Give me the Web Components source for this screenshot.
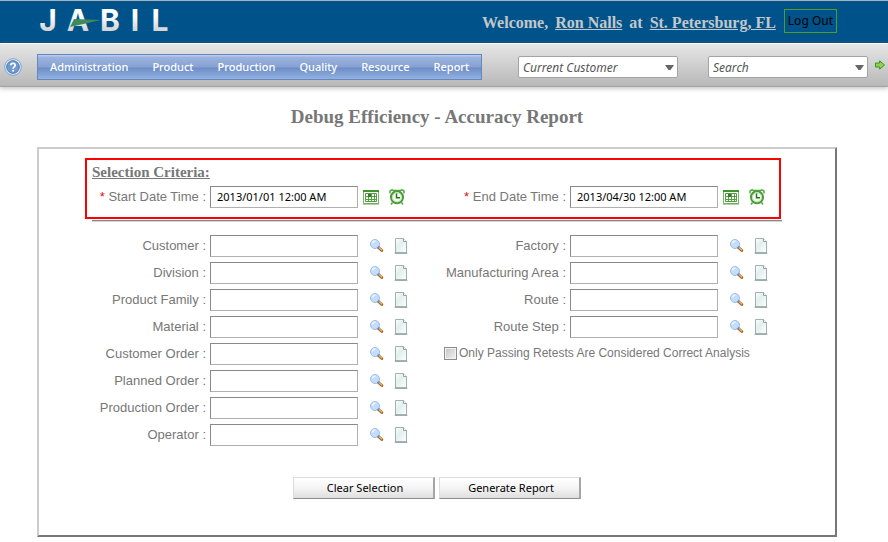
<!DOCTYPE html>
<html lang="en">
<head>
<meta charset="utf-8">
<title>Debug Efficiency - Accuracy Report</title>
<style>
  body { margin: 0; background: #fff; color: #777; font-family: "Liberation Sans", Arial, sans-serif; font-size: 13px;
    --ui: "Noto Sans", "Open Sans", sans-serif; --serif: "Liberation Serif", "Times New Roman", serif; }
</style>
</head>
<body>
<app-header></app-header>
<app-toolbar></app-toolbar>
<report-page heading="Debug Efficiency - Accuracy Report"></report-page>
<script>
const define = (name, html) => {
  const t = document.createElement('template');
  t.innerHTML = html;
  customElements.define(name, class extends HTMLElement {
    constructor() {
      super();
      this.attachShadow({ mode: 'open' }).append(t.content.cloneNode(true));
    }
    connectedCallback() {
      this.shadowRoot.querySelectorAll('[data-text]').forEach(e => { e.textContent = this.getAttribute(e.dataset.text) || ''; });
      this.shadowRoot.querySelectorAll('[data-value]').forEach(e => { e.value = this.getAttribute(e.dataset.value) || ''; });
      this.shadowRoot.querySelectorAll('[data-label]').forEach(e => { e.setAttribute('aria-label', e.dataset.label + ' ' + (this.getAttribute('label') || '')); });
    }
  });
};

const iconButton = 'button.icon { display: block; flex: none; width: 16px; height: 16px; padding: 0; border: 0; background: none; cursor: pointer; } svg { display: block; }';

define('brand-logo', `
<style>
  :host { display: block; }
  svg { display: block; overflow: visible; }
  text { font-family: Inter, "Liberation Sans", sans-serif; font-weight: 700; font-size: 30px; text-anchor: middle; }
</style>
<svg width="136" height="40" viewBox="0 0 136 40" role="img" aria-label="JABIL">
  <defs><linearGradient id="m" gradientUnits="userSpaceOnUse" x1="0" y1="8" x2="0" y2="30"><stop offset=".3" stop-color="#fff"/><stop offset="1" stop-color="#d2d2d2"/></linearGradient></defs>
  <text y="30" x="11 41 73 98 123" fill="url(#m)">JABIL</text>
  <path d="M33 26 37 18 64 19Z" fill="#3f8a5c"/>
</svg>`);

define('app-header', `
<style>
  :host { display: flex; align-items: flex-start; justify-content: space-between; box-sizing: border-box; height: 43px; padding: 0 51px 0 37px;
    background: #00528a; border-top: 1px solid #a9b1b8; border-bottom: 1px solid #00406e; white-space: nowrap; }
  .user { display: flex; align-items: flex-start; gap: 8px; margin-top: 8px; font: bold 16px/28px var(--serif); color: #c3c7ca; }
  p { display: flex; gap: 7px; margin: 0; }
  a { color: inherit; text-decoration: underline; }
  button { height: 24px; padding: 0 3px; border: 1px solid #4f9d2d; border-radius: 0; background: none; color: #000; font: 12px/20px var(--ui); }
</style>
<brand-logo></brand-logo>
<div class="user"><p><span>Welcome,</span><a href="#user">Ron Nalls</a><span>at</span><a href="#site">St. Petersburg, FL</a></p><button type="button">Log Out</button></div>`);

define('main-menu', `
<style>
  :host { display: block; }
  nav { display: flex; gap: 24px; box-sizing: border-box; height: 26px; padding: 0 12px; border: 1px solid #6486c2;
    background: linear-gradient(#b8caea 0, #b8caea 1px, #9cb3de 2px, #86a1d2 12px, #6c8dc7 13px, #93b2e0 24px); }
  a { color: #fff; text-decoration: none; font: 500 11px/24px var(--ui); }
</style>
<nav><a href="#administration">Administration</a><a href="#product">Product</a><a href="#production">Production</a><a href="#quality">Quality</a><a href="#resource">Resource</a><a href="#report">Report</a></nav>`);

define('combo-box', `
<style>
  :host { display: block; flex: none; position: relative; width: 160px; }
  select { display: block; appearance: none; box-sizing: border-box; width: 100%; height: 22px; margin: 0; padding: 1px 20px 0 4px; border: 1px solid #a3a3a3; border-radius: 2px;
    background: #fff; color: #555; font: italic 12px/20px var(--ui); }
  svg { position: absolute; right: 4px; top: 9px; pointer-events: none; }
</style>
<select data-label="Choose"><option data-text="label"></option></select>
<svg width="9" height="5" viewBox="0 0 9 5"><path d="M0 0h9L5.5 5h-2Z" fill="#666"/></svg>`);

define('app-toolbar', `
<style>
  :host { display: flex; align-items: center; box-sizing: border-box; height: 44px; padding: 0 3px 0 4px; border-top: 1px solid #fff; border-bottom: 1px solid #a2a2a2;
    background: linear-gradient(#e6e6e6, #b8b8b8); box-shadow: 0 2px 4px #ccc; white-space: nowrap; }
  main-menu { margin: 3px auto 0 15px; }
  combo-box { margin: 4px 30px 0 0; }
  combo-box:last-of-type { margin-right: 7px; }
  ${iconButton}
  button.help { width: 18px; height: 18px; margin-top: 3px; }
  button.go { width: 10px; height: 10px; }
</style>
<button class="icon help" type="button" aria-label="Help"><svg width="18" height="18" viewBox="0 0 18 18">
  <circle cx="9" cy="9" r="8.3" fill="#dce8f6" stroke="#82a8d4"/><circle cx="9" cy="9" r="6.3" fill="#7199cf" stroke="#4b7abb"/>
  <path d="M6.700 7.300C6.800 4.400 11.400 4.700 11.200 7.400 11.100 8.900 9.100 8.800 9.100 10.800" fill="none" stroke="#fff" stroke-width="1.7"/><circle cx="9.1" cy="12.8" r="1" fill="#fff"/></svg></button>
<main-menu></main-menu>
<combo-box label="Current Customer"></combo-box>
<combo-box label="Search"></combo-box>
<button class="icon go" type="button" aria-label="Go"><svg width="10" height="10" viewBox="0 0 10 10"><path d="M.5 3h4.2V.8L9.5 5 4.7 9.2V7H.5Z" fill="#8ed04f" stroke="#3c9422"/></svg></button>`);

const field = (extra, icons) => `
<style>
  :host { display: flex; align-items: center; height: 22px; white-space: nowrap; }
  label { flex: none; width: var(--label-width, 121px); margin-right: 4px; text-align: right; line-height: 22px; }
  input { flex: none; box-sizing: border-box; width: 148px; height: 22px; margin: 0; padding: 0 6px 1px; border: 1px solid #b0b0b0; border-top-color: #888; border-left-color: #888;
    border-radius: 0; background: #fff; color: #000; font: 11px/18px var(--ui); }
  .icons { display: flex; ${extra} }
  ${iconButton}
</style>
<label for="v"><slot name="mark"></slot><span data-text="label"></span> :</label><input id="v" type="text" data-value="value">
<div class="icons">${icons}</div>`;

define('lookup-field', field('gap: 8px; margin-left: 11px;', `
<button class="icon" type="button" data-label="Find"><svg width="16" height="16" viewBox="0 0 16 16">
  <path d="m9.5 9.5 3.300 3" stroke="#a86a28" stroke-width="3" stroke-linecap="round"/><path d="m10 9.500 3 2.800" stroke="#e9b472" stroke-width="1.2"/>
  <circle cx="6" cy="6" r="4.5" fill="#c5def8" stroke="#9dbdec"/><path d="M3.500 5.500A3 3 0 0 1 6.500 3" fill="none" stroke="#eef6ff" stroke-width="1.5"/><path d="M8 10.200A4.500 4.500 0 0 0 10.200 8" fill="none" stroke="#6f92d0" stroke-width="1.400"/></svg></button>
<button class="icon" type="button" data-label="Clear"><svg width="16" height="16" viewBox="0 0 16 16">
  <defs><linearGradient id="p" x1="0" y1="0" x2="1" y2="1"><stop stop-color="#fff"/><stop offset=".4" stop-color="#e2efed"/><stop offset="1" stop-color="#fff"/></linearGradient></defs>
  <path d="M1 15.500h14" stroke="#dbe0e0"/><path d="M2.500.500h8l3 3v11.500h-11Z" fill="url(#p)" stroke="#9fb2b1"/><path d="M10.500.500v3h3" fill="#fff" stroke="#8ea3a2"/><path d="M2 15h12" stroke="#7d9090"/></svg></button>`));

define('date-field', field('gap: 10px; margin-left: 5px;', `
<button class="icon" type="button" data-label="Calendar for"><svg width="16" height="16" viewBox="0 0 16 16">
  <path d="M.5 1.500h15v13H.5Z" fill="#fff" stroke="#75b765"/><path d="M0 2h16" stroke="#3f9430" stroke-width="2"/>
  <path d="M2.500 4.500h11v8h-11ZM5.500 4.500v8M8.500 4.500v8M11.500 4.500v8M2 7.500h12M2 10.500h12" fill="none" stroke="#579e43"/><path d="M5 5h3v3H5z" fill="#2f8221"/><path d="M0 15h16" stroke="#65a856"/></svg></button>
<button class="icon" type="button" data-label="Time for"><svg width="16" height="16" viewBox="0 0 16 16">
  <path d="M1 4.500V2L3 .8 5 2M15 4.500V2L13 .8 11 2M3.500 13.500 2 15.500M12.500 13.500l1.500 2M4.500 1.500h7" fill="none" stroke="#57a747" stroke-width="1.500"/>
  <circle cx="8" cy="8.300" r="6" fill="#f8fff5" stroke="#4a9d37" stroke-width="2"/><circle cx="8" cy="8.300" r="4.500" fill="none" stroke="#b6deac"/><path d="M7.500 4.500v4.300H11" fill="none" stroke="#23731b" stroke-width="1.500"/></svg></button>`));

define('check-option', `
<style>
  :host { display: flex; align-items: center; height: 20px; font-size: 12px; white-space: nowrap; }
  input { appearance: none; flex: none; box-sizing: border-box; width: 13px; height: 13px; margin: 0 2px 0 0; border: 1px solid #8c8c8c;
    background: linear-gradient(135deg, #bfc3c6, #f3f3f3); box-shadow: inset 0 0 0 1px #f2f2f2; }
  input:checked { background: #567; }
</style>
<input type="checkbox" id="c"><label for="c"><slot></slot></label>`);

define('action-button', `
<style>
  :host { display: block; }
  button { display: block; box-sizing: border-box; width: 142px; height: 22px; padding: 0 0 0 3px; border: 1px solid #ddd; border-right: 2px solid #a6a6a6; border-bottom: 1px solid #8c8c8c; border-radius: 0;
    background: linear-gradient(#fff, #f4f4f4 50%, #dedede); color: #000; font: 11px/20px var(--ui); }
</style>
<button type="button"><slot></slot></button>`);

define('report-page', `
<style>
  :host { display: block; padding: 20px 14px 5px 0; }
  h1 { margin: 0 0 20px; text-align: center; font: bold 19px/20px var(--serif); }
  form { box-sizing: border-box; max-width: 800px; margin: 0 auto; padding: 9px 53px 36px 46px; border: 2px solid; border-color: #ccc #777 #777 #ccc; }
  .dates { margin-right: 1px; padding: 3px 0 9px; border: 2px solid #f00; --label-width: 119px; }
  h2 { margin: 0; padding-left: 5px; font: bold 15px/18px var(--serif); text-decoration: underline; }
  .cols { display: grid; grid-template-columns: 360px 1fr; }
  .dates .cols { margin-top: 5px; }
  hr { margin: 1px 0 13px 7px; border: 0; border-top: 1px solid #888; border-bottom: 1px solid #d5d5d5; }
  .stack { display: flex; flex-direction: column; gap: 5px; }
  check-option { margin-left: -1px; }
  .actions { display: flex; justify-content: center; gap: 4px; margin: 31px 0 0 7px; }
  .red { color: #e01020; }
  @media (max-width: 820px) { .cols { grid-template-columns: 1fr; row-gap: 5px; } }
</style>
<h1 data-text="heading"></h1>
<form>
  <section class="dates">
    <h2>Selection Criteria:</h2>
    <div class="cols">
      <date-field label="Start Date Time" value="2013/01/01 12:00 AM"><span slot="mark"><span class="red" style="color:#e01020">*</span> </span></date-field>
      <date-field label="End Date Time" value="2013/04/30 12:00 AM"><span slot="mark"><span class="red">*</span> </span></date-field>
    </div>
  </section>
  <hr>
  <div class="cols">
    <div class="stack">
      <lookup-field label="Customer"></lookup-field><lookup-field label="Division"></lookup-field><lookup-field label="Product Family"></lookup-field><lookup-field label="Material"></lookup-field>
      <lookup-field label="Customer Order"></lookup-field><lookup-field label="Planned Order"></lookup-field><lookup-field label="Production Order"></lookup-field><lookup-field label="Operator"></lookup-field>
    </div>
    <div class="stack">
      <lookup-field label="Factory"></lookup-field><lookup-field label="Manufacturing Area"></lookup-field><lookup-field label="Route"></lookup-field><lookup-field label="Route Step"></lookup-field>
      <check-option>Only Passing Retests Are Considered Correct Analysis</check-option>
    </div>
  </div>
  <div class="actions"><action-button>Clear Selection</action-button><action-button>Generate Report</action-button></div>
</form>`);
</script>
</body>
</html>
